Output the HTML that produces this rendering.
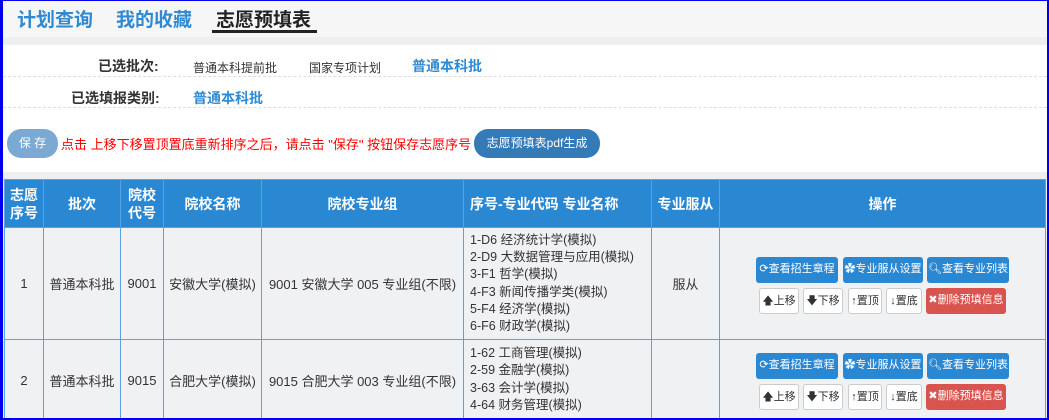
<!DOCTYPE html>
<html><head><meta charset="utf-8"><style>
*{margin:0;padding:0;box-sizing:border-box}
html,body{width:1049px;height:420px;overflow:hidden}
body{background:#fff;font-family:"Liberation Sans","Noto Sans CJK SC",sans-serif;color:#333;position:relative}
#wrap{position:absolute;left:0;top:0;width:1049px;height:420px;overflow:hidden}
.frame{position:absolute;left:0;top:0;width:1049px;height:420px;border:1px solid #0000ee;border-left:3px solid #0000ee;border-right:2px solid #0000ee;border-bottom:2px solid #0000ee;z-index:10;pointer-events:none}
.nav{position:absolute;left:0;top:0;width:1049px;height:37px;background:#f6f6f6}
.nav span{position:absolute;top:5px;font-size:19px;font-weight:bold;color:#2e8ad2}
.strip{position:absolute;left:0;top:37px;width:1049px;height:8px;background:#eeeff1}
.a{position:absolute;font-size:13px}
.dash{position:absolute;left:3px;width:1044px;border-top:1px dashed #ddd}
.btn{position:absolute;border-radius:14px;color:#fff;font-size:12px;text-align:center;line-height:29px}
.gray{position:absolute;left:0;top:172px;width:1049px;height:248px;background:#eeeff1}
table{position:absolute;left:4px;top:179px;border-collapse:collapse;table-layout:fixed}
td,th{border:1px solid #5aa3e0;text-align:center;font-size:13px;overflow:hidden}
th{background:#2a88d2;color:#fff;font-size:14px;font-weight:bold;height:48px;line-height:18px}
td{background:#f0f1f3}
.maj{text-align:left;padding-left:6px;line-height:17.3px;font-size:12.5px}
.b{position:absolute;font-size:11px;line-height:25px;height:26px;text-align:center;border-radius:3px;white-space:nowrap;overflow:hidden}
.p{background:#2a88d2;color:#fff}
.w{background:#fff;border:1px solid #ccc;color:#333;line-height:24px}
.r{background:#d9534f;color:#fff}
</style></head><body><div id="wrap">
<div class="nav">
<span style="left:17px">计划查询</span>
<span style="left:116px">我的收藏</span>
<span style="left:216px;color:#222">志愿预填表</span>
<div style="position:absolute;left:212px;top:30px;width:105px;height:3px;background:#222"></div>
</div>
<div class="strip"></div>
<div class="a" style="left:98px;top:56px;font-weight:bold;font-size:14px">已选批次:</div>
<div class="a" style="left:193px;top:59px;font-size:12px">普通本科提前批</div>
<div class="a" style="left:309px;top:59px;font-size:12px">国家专项计划</div>
<div class="a" style="left:412px;top:56px;font-weight:bold;font-size:14px;color:#2e8ad2">普通本科批</div>
<div class="dash" style="top:76px"></div>
<div class="a" style="left:71px;top:88px;font-weight:bold;font-size:14px">已选填报类别:</div>
<div class="a" style="left:193px;top:88px;font-weight:bold;font-size:14px;color:#2e8ad2">普通本科批</div>
<div class="dash" style="top:107px"></div>
<div class="btn" style="left:7px;top:129px;width:51px;background:#7ba9d3">保 存</div>
<div class="a" style="left:61px;top:134px;color:#f00;font-size:13px">点击 上移下移置顶置底重新排序之后，请点击 "保存" 按钮保存志愿序号</div>
<div class="btn" style="left:474px;top:129px;width:126px;background:#337ab7">志愿预填表pdf生成</div>
<div class="gray"></div>
<table>
<colgroup><col style="width:39px"><col style="width:77px"><col style="width:43px"><col style="width:98px"><col style="width:202px"><col style="width:188px"><col style="width:68px"><col style="width:326px"></colgroup>
<tr><th>志愿<br>序号</th><th>批次</th><th>院校<br>代号</th><th>院校名称</th><th>院校专业组</th><th style="text-align:left;padding-left:6px">序号-专业代码 专业名称</th><th>专业服从</th><th>操作</th></tr>
<tr style="height:112px"><td>1</td><td>普通本科批</td><td>9001</td><td>安徽大学(模拟)</td><td>9001 安徽大学 005 专业组(不限)</td><td class="maj">1-D6 经济统计学(模拟)<br>2-D9 大数据管理与应用(模拟)<br>3-F1 哲学(模拟)<br>4-F3 新闻传播学类(模拟)<br>5-F4 经济学(模拟)<br>6-F6 财政学(模拟)</td><td>服从</td><td></td></tr>
<tr style="height:82px"><td>2</td><td>普通本科批</td><td>9015</td><td>合肥大学(模拟)</td><td>9015 合肥大学 003 专业组(不限)</td><td class="maj" style="vertical-align:top;padding-top:5px">1-62 工商管理(模拟)<br>2-59 金融学(模拟)<br>3-63 会计学(模拟)<br>4-64 财务管理(模拟)</td><td></td><td></td></tr>
</table>
<div class="b p" style="left:756px;top:257px;width:82px">⟳查看招生章程</div>
<div class="b p" style="left:843px;top:257px;width:80px">✿专业服从设置</div>
<div class="b p" style="left:927px;top:257px;width:82px">🔍︎查看专业列表</div>
<div class="b w" style="left:759px;top:288px;width:40px">🡅上移</div>
<div class="b w" style="left:803px;top:288px;width:40px">🡇下移</div>
<div class="b w" style="left:848px;top:288px;width:34px">↑置顶</div>
<div class="b w" style="left:886px;top:288px;width:36px">↓置底</div>
<div class="b r" style="left:926px;top:288px;width:80px">✖删除预填信息</div>
<div class="b p" style="left:756px;top:353px;width:82px">⟳查看招生章程</div>
<div class="b p" style="left:843px;top:353px;width:80px">✿专业服从设置</div>
<div class="b p" style="left:927px;top:353px;width:82px">🔍︎查看专业列表</div>
<div class="b w" style="left:759px;top:384px;width:40px">🡅上移</div>
<div class="b w" style="left:803px;top:384px;width:40px">🡇下移</div>
<div class="b w" style="left:848px;top:384px;width:34px">↑置顶</div>
<div class="b w" style="left:886px;top:384px;width:36px">↓置底</div>
<div class="b r" style="left:926px;top:384px;width:80px">✖删除预填信息</div>
<div class="frame"></div>
</div></body></html>
